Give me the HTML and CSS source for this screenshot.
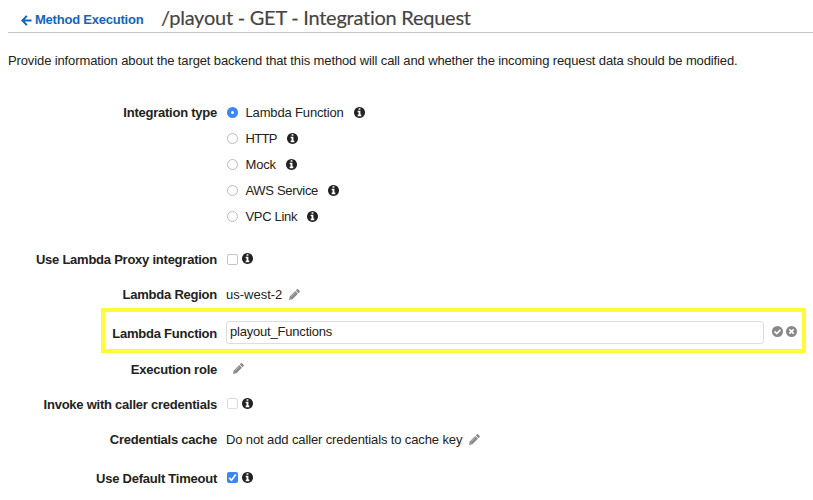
FILE: index.html
```
<!DOCTYPE html>
<html lang="en">
<head>
<meta charset="utf-8">
<title>Integration Request</title>
<link rel="stylesheet" href="styles.css">
</head>
<body>
<svg class="defs" aria-hidden="true">
  <symbol id="info" viewBox="0 128 1536 1536"><path d="M1024 1376v-160q0-14-9-23t-23-9h-96v-512q0-14-9-23t-23-9h-320q-14 0-23 9t-9 23v160q0 14 9 23t23 9h96v320h-96q-14 0-23 9t-9 23v160q0 14 9 23t23 9h448q14 0 23-9t9-23zm-128-896v-160q0-14-9-23t-23-9h-192q-14 0-23 9t-9 23v160q0 14 9 23t23 9h192q14 0 23-9t9-23zm640 416q0 209-103 385.500t-279.500 279.500-385.500 103-385.500-103-279.500-279.500-103-385.500 103-385.500 279.500-279.500 385.500-103 385.500 103 279.500 279.500 103 385.500z"/></symbol>
  <symbol id="pencil" viewBox="0 0 12 12"><path d="M0 12 .8 8.300 6.800 2.300 9.700 5.200 3.700 11.200ZM7.500 1.600 8.700.4Q9.300-.2 9.900.4L11.600 2.100Q12.200 2.700 11.600 3.300L10.400 4.500Z"/><path class="shine" d="M2.300 8.400 7 3.700M1.300 9.600 2.400 10.700"/></symbol>
  <symbol id="check" viewBox="0 0 12 12"><circle cx="6" cy="6" r="6"/><path class="cut" d="m2.800 5.900 2.400 2.400 4.100-4.200"/></symbol>
  <symbol id="cross" viewBox="0 0 12 12"><circle cx="6" cy="6" r="6"/><path class="cut" d="m3.700 3.700 4.600 4.600m0-4.600-4.600 4.600"/></symbol>
</svg>
<header class="header">
  <a class="back"><svg class="arrow" viewBox="0 0 12 12"><path d="M6.400 1 1.500 6l4.900 5M1.800 6H11.500"/></svg>Method Execution</a>
  <h1 class="title">/playout - GET - Integration Request</h1>
</header>
<p class="intro"><span class="intro-text">Provide information about the target backend that this method will call and whether the incoming request data should be modified.</span></p>
<main class="form">
  <div class="row types">
    <div class="label">Integration type</div>
    <div class="options">
      <label class="option"><i class="radio on"></i><span class="name">Lambda Function</span><svg class="info"><use href="#info"/></svg></label>
      <label class="option"><i class="radio"></i><span class="name caps">HTTP</span><svg class="info"><use href="#info"/></svg></label>
      <label class="option"><i class="radio"></i><span class="name">Mock</span><svg class="info"><use href="#info"/></svg></label>
      <label class="option"><i class="radio"></i><span class="name mixed">AWS Service</span><svg class="info"><use href="#info"/></svg></label>
      <label class="option"><i class="radio"></i><span class="name mixed">VPC Link</span><svg class="info"><use href="#info"/></svg></label>
    </div>
  </div>
  <div class="row proxy">
    <div class="label">Use Lambda Proxy integration</div>
    <div class="control"><i class="box"></i><svg class="info"><use href="#info"/></svg></div>
  </div>
  <div class="row region">
    <div class="label">Lambda Region</div>
    <div class="control"><span class="region-name">us-west-2</span><svg class="pencil"><use href="#pencil"/></svg></div>
  </div>
  <div class="row highlight">
    <div class="label">Lambda Function</div>
    <div class="control"><input class="field" type="text" value="playout_Functions"><svg class="action"><use href="#check"/></svg><svg class="action"><use href="#cross"/></svg></div>
  </div>
  <div class="row role">
    <div class="label">Execution role</div>
    <div class="control"><svg class="pencil"><use href="#pencil"/></svg></div>
  </div>
  <div class="row invoke">
    <div class="label">Invoke with caller credentials</div>
    <div class="control"><i class="box faint"></i><svg class="info"><use href="#info"/></svg></div>
  </div>
  <div class="row cache">
    <div class="label">Credentials cache</div>
    <div class="control">Do not add caller credentials to cache key<svg class="pencil"><use href="#pencil"/></svg></div>
  </div>
  <div class="row timeout">
    <div class="label">Use Default Timeout</div>
    <div class="control"><i class="box checked"><svg class="tick" viewBox="0 0 10 10"><path d="m2 5.300 2.100 2.200L8 2.300"/></svg></i><svg class="info"><use href="#info"/></svg></div>
  </div>
</main>
</body>
</html>
```
FILE: styles.css
```
* { box-sizing: border-box; }
body {
  margin: 0;
  height: 500px;
  overflow: hidden;
  background: #fff;
  color: #222;
  font: 13px/26px "Liberation Sans", Arial, sans-serif;
  letter-spacing: -.12px;
  white-space: nowrap;
}
svg { flex: none; }
.defs { display: none; }

.header {
  display: flex;
  height: 33px;
  margin-left: 8px;
  padding-left: 13px;
  border-bottom: 1px solid #c6c6c6;
}
.back {
  display: flex;
  align-items: center;
  gap: 3px;
  width: 140px;
  height: 26px;
  margin-top: 7px;
  color: #1166bb;
  font-weight: bold;
  letter-spacing: -.22px;
}
.arrow {
  width: 11px;
  height: 11px;
  fill: none;
  stroke: currentColor;
  stroke-width: 2.2;
}
.title {
  margin: 4px 0 0;
  color: #444;
  font: 400 20px/26px Lato, sans-serif;
  letter-spacing: -.25px;
  -webkit-text-stroke: .15px #444;
}
.intro { margin: 15px 0 0 8px; }

.row {
  display: grid;
  grid-template-columns: 217px 1fr;
  column-gap: 9px;
}
.label { text-align: right; font-weight: bold; letter-spacing: -.24px; }
.control, .option { display: flex; align-items: center; height: 26px; }
.types { margin-top: 26px; }
.proxy { margin-top: 17px; }
.region { margin-top: 9px; }
.role { margin-top: 4px; }
.invoke { margin-top: 9px; }
.cache { margin-top: 9px; }
.timeout { margin-top: 13px; }
.proxy .control { height: 24px; }
.role .control { height: 23px; }
.invoke .control, .timeout .control { height: 23px; }

.highlight {
  grid-template-columns: 112px 1fr;
  width: 705px;
  height: 45px;
  margin-left: 101px;
  border: 4px solid #fffb3a;
  padding-top: 9px;
}
.field {
  width: 538px;
  height: 23px;
  margin-right: 8px;
  padding: 0 3px 2px;
  border: 1px solid #ddd;
  border-radius: 3px;
  color: #222;
  background: #fff;
  font: inherit;
  letter-spacing: -.2px;
}
.highlight .control { height: 23px; }
.highlight .action { margin-bottom: 2px; }

.radio, .box { flex: none; border: 1px solid #bbb; background: #fff; }
.radio { width: 11px; height: 11px; margin: 0 8px 1px 1px; border-radius: 50%; }
.radio.on { border: 4px solid #3b86f7; }
.name { margin-left: -.5px; letter-spacing: -.15px; }
.name.caps { letter-spacing: -.7px; }
.name.mixed { letter-spacing: -.33px; }
.box { display: flex; width: 11px; height: 11px; margin: 0 4px 0 1px; border-color: #c4c4c4; border-radius: 2px; }
.box.faint { border-color: #ddd; }
.box.checked { border: 0; background: #3b86f7; }
.tick { width: 11px; height: 11px; fill: none; stroke: #fff; stroke-width: 1.5; }

.info { width: 11px; height: 11px; margin-bottom: 1px; fill: #222; }
.option .info { margin: 0 0 2px 10px; }
.pencil { width: 11px; height: 11px; margin: 0 0 1px 7px; fill: #888; }
.region-name { letter-spacing: 0; }
.shine { fill: none; stroke: #ddd; stroke-width: .7; }
.action { width: 11px; height: 11px; margin-right: 3px; fill: #888; }
.cut { fill: none; stroke: #fff; stroke-width: 1.8; }
```
